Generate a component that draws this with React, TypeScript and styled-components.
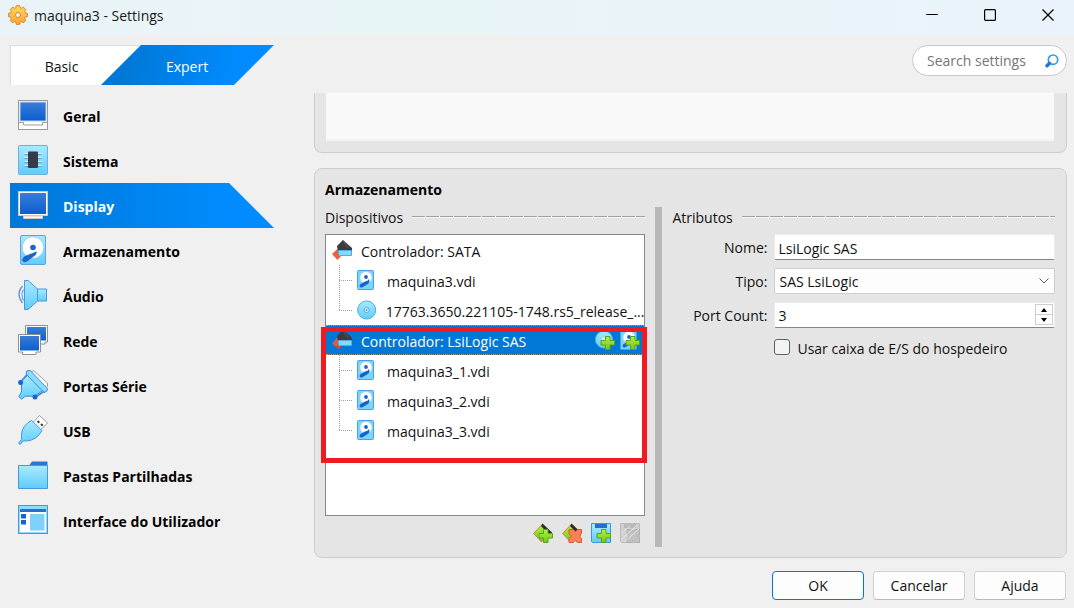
import React, { useState } from "react";
import styled, { createGlobalStyle, css } from "styled-components";

const GlobalStyle = createGlobalStyle`
  * { box-sizing: border-box; }
  body {
    margin: 0;
    background: #f0f0f0;
    color: #111;
    font: 14px/20px "Open Sans", "Noto Sans", sans-serif;
  }
  button, input, select, textarea { font: inherit; color: inherit; margin: 0; }
`;

const Window = styled.div`
  min-height: 100vh;
  display: flex;
  flex-direction: column;
`;

const TitleBar = styled.header`
  display: flex;
  align-items: center;
  height: 34px;
  padding: 0 0 4px 8px;
  background: linear-gradient(90deg, #e9f4f8, #e8f5f7 40%, #eaf3fb);
`;

const WindowTitle = styled.h1`
  flex: 1;
  margin: 0 0 0 6px;
  padding-top: 2px;
  font-size: 14px;
  font-weight: 400;
  color: #1a1a1a;
`;

const CaptionButton = styled.button`
  display: flex;
  align-items: center;
  justify-content: center;
  width: 58px;
  height: 30px;
  padding: 0;
  border: 0;
  background: none;
`;

const CaptionButtons = styled.div`
  display: flex;
  margin-right: -3px;
`;

const TopRow = styled.div`
  display: flex;
  justify-content: space-between;
  align-items: flex-start;
  padding: 11px 7px 8px 10px;
`;

const Tabs = styled.div`
  display: flex;
  width: 264px;
  height: 40px;
`;

const Tab = styled.button<{ $active?: boolean }>`
  border: 0;
  ${(p) =>
    p.$active
      ? css`
          width: 173px;
          padding: 4px 1px 0 0;
          margin-left: -39px;
          color: #fff;
          background: linear-gradient(100deg, #0078d7 15%, #008cff 80%);
          clip-path: polygon(40px 0, 100% 0, calc(100% - 40px) 100%, 0 100%);
        `
      : css`
          width: 130px;
          padding: 3px 28px 0 0;
          background: #fff;
          border: solid #dcdcdc;
          border-width: 1px 0 0 1px;
          clip-path: polygon(0 0, 100% 0, calc(100% - 40px) 100%, 0 100%);
        `}
`;

const SearchBox = styled.label`
  display: flex;
  align-items: center;
  width: 155px;
  height: 31px;
  padding: 0 7px 0 14px;
  border: 1px solid #c9c9c9;
  border-radius: 16px;
  background: #fff;
`;

const SearchInput = styled.input`
  flex: 1;
  min-width: 0;
  padding: 0;
  border: 0;
  outline: 0;
  background: none;
  &::placeholder { color: #757575; opacity: 1; }
`;

const Body = styled.div`
  flex: 1;
  display: grid;
  grid-template-columns: 264px minmax(0, 1fr);
  gap: 40px;
  padding: 0 7px 0 10px;
`;

const NavList = styled.nav`
  display: flex;
  flex-direction: column;
`;

const NavItem = styled.a<{ $active?: boolean }>`
  display: flex;
  align-items: center;
  gap: 15px;
  height: 45px;
  padding: 0 0 1px 8px;
  font-weight: 700;
  color: #000;
  text-decoration: none;
  ${(p) =>
    p.$active &&
    css`
      color: #fff;
      background: linear-gradient(90deg, #0078d7, #008cff 85%);
      clip-path: polygon(0 0, calc(100% - 45px) 0, 100% 100%, 0 100%);
    `}
`;

const NavLabel = styled.span`
  padding-top: 3px;
`;

const Pages = styled.main`
  display: flex;
  flex-direction: column;
  gap: 15px;
`;

const Card = styled.section<{ $clipped?: boolean }>`
  padding: 11px 11px 10px 10px;
  border: 1px solid #cdcdcd;
  border-radius: 8px;
  background: #e5e5e5;
  ${(p) =>
    p.$clipped &&
    css`
      height: 60px;
      padding: 0 12px 11px 11px;
      border-top: 0;
      border-radius: 0 0 8px 8px;
    `}
`;

const Description = styled.textarea`
  display: block;
  width: 100%;
  height: 48px;
  border: 0;
  border-bottom: 2px solid #f3f3f3;
  background: #f9f9f9;
  resize: none;
`;

const CardTitle = styled.h2`
  margin: 0 0 7px;
  font-size: 14px;
  line-height: 20px;
  color: #000;
`;

const Columns = styled.div`
  display: grid;
  grid-template-columns: minmax(0, 320fr) 7px minmax(0, 382fr);
  gap: 10px;
  min-height: 340px;
`;

const Splitter = styled.div`
  background: #b8b8b8;
`;

const Column = styled.div`
  display: flex;
  flex-direction: column;
`;

const GroupHeading = styled.h3`
  display: flex;
  align-items: center;
  gap: 9px;
  margin: 0 0 5px;
  font-size: 14px;
  font-weight: 400;
  line-height: 22px;
  &::after {
    content: "";
    flex: 1;
    height: 2px;
    margin-bottom: 2px;
    background:
      repeating-linear-gradient(90deg, #a0a0a0 0 13px, #fff 13px 14px) top / 100% 1px no-repeat,
      #f6f6f6;
  }
`;

const Tree = styled.div`
  flex: 1;
  border: 1px solid #828790;
  background: #fff;
`;

const TreeGroup = styled.div`
  position: relative;
`;

const Highlight = styled.div`
  position: absolute;
  inset: 2px -3px -18px -5px;
  border: 5px solid #ed1c24;
  pointer-events: none;
`;

const TreeRow = styled.div<{ $selected?: boolean }>`
  display: flex;
  align-items: center;
  height: 30px;
  padding: 0 4px 0 6px;
  white-space: nowrap;
  ${(p) =>
    p.$selected &&
    css`
      color: #fff;
      background: #0078d7;
      border: dotted #f08a28;
      border-width: 1px 0;
    `}
`;

const ControllerName = styled.span`
  flex: 1;
  margin-left: 9px;
  padding-top: 3px;
`;

const RowButton = styled.button`
  display: flex;
  margin-left: 5px;
  padding: 0;
  border: 0;
  background: none;
`;

const ChildRow = styled.div`
  display: flex;
  align-items: center;
  height: 30px;
  padding-left: 13px;
`;

const Branch = styled.span<{ $last?: boolean }>`
  display: flex;
  align-items: center;
  width: 13px;
  height: 30px;
  margin-right: 5px;
  background:
    repeating-linear-gradient(180deg, #a0a0a0 0 1px, #fff 1px 2px) left top / 1px
      ${(p) => (p.$last ? "16px" : "100%")} no-repeat;
  &::after {
    content: "";
    flex: 1;
    height: 1px;
    background: repeating-linear-gradient(90deg, #a0a0a0 0 1px, #fff 1px 2px);
  }
`;

const ChildName = styled.span`
  margin-left: 10px;
  padding-top: 3px;
  white-space: nowrap;
`;

const Toolbar = styled.div`
  display: flex;
  justify-content: flex-end;
  gap: 9px;
  padding: 7px 5px 4px;
`;

const ToolButton = styled.button`
  display: flex;
  padding: 0;
  border: 0;
  background: none;
`;

const Form = styled.div`
  display: grid;
  grid-template-columns: 95px minmax(0, 1fr);
  column-gap: 7px;
  row-gap: 8px;
`;

const FieldLabel = styled.label`
  height: 26px;
  line-height: 28px;
  text-align: right;
  white-space: nowrap;
`;

const fieldBase = css`
  width: 100%;
  height: 26px;
  border: 1px solid #ececec;
  border-bottom-color: #868686;
  border-radius: 2px;
  background: #fff;
`;

const TextField = styled.input`
  ${fieldBase}
  padding: 2px 3px 0;
`;

const SelectWrap = styled.div`
  display: grid;
  align-items: center;
  justify-items: end;
  & > * { grid-area: 1 / 1; }
  & > svg { margin-right: 6px; pointer-events: none; }
`;

const SelectField = styled.select`
  ${fieldBase}
  appearance: none;
  padding: 2px 4px 0;
  border-color: #cfcfcf;
  background: #fdfdfd;
`;

const SpinWrap = styled.div`
  ${fieldBase}
  display: flex;
  padding-right: 1px;
`;

const SpinField = styled.input`
  flex: 1;
  min-width: 0;
  padding: 2px 3px 0;
  border: 0;
  outline: 0;
  background: none;
  appearance: textfield;
  &::-webkit-inner-spin-button { appearance: none; }
`;

const SpinButtons = styled.div`
  display: flex;
  flex-direction: column;
  width: 18px;
  height: 21px;
  margin-top: 1px;
`;

const SpinButton = styled.button`
  display: flex;
  flex: 1;
  align-items: center;
  justify-content: center;
  padding: 0;
  border: 1px solid #cfcfcf;
  background: #fdfdfd;
  & + & { border-top: 0; }
`;

const CheckLabel = styled.label`
  grid-column: 2;
  display: flex;
  align-items: center;
  gap: 7px;
  height: 22px;
  white-space: nowrap;
`;

const CheckText = styled.span`
  padding-top: 4px;
`;

const Checkbox = styled.input`
  appearance: none;
  width: 16px;
  height: 16px;
  border: 1px solid #626262;
  border-radius: 3px;
  background: #f3f3f3;
  &:checked { background: #0078d7; }
`;

const Footer = styled.footer`
  display: flex;
  justify-content: flex-end;
  gap: 9px;
  padding: 13px 8px 8px;
`;

const DialogButton = styled.button<{ $primary?: boolean }>`
  width: 92px;
  height: 29px;
  padding: 0;
  border: 1px solid ${(p) => (p.$primary ? "#0078d4" : "#d0d0d0")};
  border-bottom-color: ${(p) => (p.$primary ? "#0078d4" : "#bababa")};
  border-radius: 4px;
  background: #fdfdfd;
`;

/* Gradients shared by every icon */
const Gradients = () => (
  <svg width="0" height="0" style={{ display: "block" }} aria-hidden>
    <defs>
      <linearGradient id="screen" x1="0" y1="0" x2="0" y2="1">
        <stop offset="0" stopColor="#3b7cd6" />
        <stop offset="1" stopColor="#0a5fd0" />
      </linearGradient>
      <linearGradient id="sky" x1="0" y1="0" x2="0" y2="1">
        <stop offset="0" stopColor="#a9eaff" />
        <stop offset="1" stopColor="#5fcdfb" />
      </linearGradient>
      <linearGradient id="gold" x1="0" y1="0" x2="0" y2="1">
        <stop offset="0" stopColor="#ffdc5c" />
        <stop offset="1" stopColor="#fba32c" />
      </linearGradient>
      <linearGradient id="green" x1="0" y1="0" x2="0" y2="1">
        <stop offset="0" stopColor="#b5f23c" />
        <stop offset="1" stopColor="#6fc61c" />
      </linearGradient>
    </defs>
  </svg>
);

const Icon30 = ({ children }: { children: React.ReactNode }) => (
  <svg width="30" height="30" viewBox="0 0 30 30" aria-hidden>{children}</svg>
);

const GearIcon = () => (
  <svg width="20" height="20" viewBox="0 0 20 20" aria-hidden>
    <g fill="url(#gold)" stroke="#dc8238" strokeWidth="1" strokeLinejoin="round">
      <path
        fillRule="evenodd"
        d="M8.3.6h3.4l.5 2.2 1.2.5 2-1.2 2.4 2.4-1.2 2 .5 1.3 2.3.5v3.4l-2.3.5-.5 1.2 1.2 2-2.4 2.4-2-1.2-1.2.5-.5 2.3H8.3l-.5-2.3-1.2-.5-2 1.2-2.4-2.4 1.2-2-.5-1.2L.6 11.7V8.3l2.3-.5.5-1.3-1.2-2 2.4-2.4 2 1.2 1.2-.5zM10 7.500a2.500 2.500 0 1 0 0 5 2.500 2.500 0 1 0 0-5z"
      />
    </g>
  </svg>
);

const GeneralIcon = () => (
  <Icon30>
    <rect x=".5" y=".5" width="29" height="29" fill="#fff" stroke="#9a9a9a" />
    <rect x="1.5" y="1.5" width="27" height="20" fill="#b9d3f3" />
    <rect x="2.5" y="2.5" width="25" height="18" fill="url(#screen)" />
    <path d="M1 22.5h4.500v2.500h19v-2.500H29" fill="none" stroke="#9a9a9a" />
  </Icon30>
);

const SystemIcon = () => (
  <Icon30>
    <rect x=".5" y=".5" width="29" height="29" rx="1" fill="url(#sky)" stroke="#6db1e4" />
    <path d="M6.500 9.500h17M6.500 13.500h17M6.500 17.500h17M6.500 21.500h17" stroke="#5a9dc4" />
    <path d="M6.500 8.500h17M6.500 12.500h17M6.500 16.500h17M6.500 20.500h17" stroke="#e9f8ff" />
    <rect x="10" y="6.500" width="10" height="16.500" rx="1" fill="#353b4a" />
  </Icon30>
);

const DisplayIcon = () => (
  <Icon30>
    <rect x=".5" y="1.500" width="29" height="24" fill="#fff" stroke="#c9c9c9" />
    <rect x="2" y="3" width="26" height="21" fill="url(#screen)" />
    <path d="M5.500 26h19v2.500h-19z" fill="#fff" stroke="#c9c9c9" />
  </Icon30>
);

const StorageIcon = () => (
  <Icon30>
    <rect x="2.500" y=".5" width="25" height="29" rx="1.500" fill="url(#sky)" stroke="#5ba3e2" />
    <circle cx="15" cy="12.500" r="10.800" fill="#fff" stroke="#86bde6" strokeWidth=".7" />
    <path d="M18.500 16.500q1 3-3.500 5.500L9 26.500q-3 1.500-4.500-.5-1-3 2.500-5z" fill="#1b66cc" />
    <circle cx="15" cy="12.500" r="2.800" fill="#1b66cc" />
  </Icon30>
);

const AudioIcon = () => (
  <Icon30>
    <path d="M4.500 6q-7 8 0 17" fill="none" stroke="#5f98d8" strokeWidth="1.300" />
    <path d="M6.500 10h-1.500q-2.500 4 0 10h2z" fill="#d8effc" stroke="#5f98d8" />
    <path d="M19 9h9.500v12H19z" fill="url(#sky)" stroke="#4b96dc" />
    <path d="M6.500.5h3.500l9.500 8.500v12L10 29.500H6.500z" fill="url(#sky)" stroke="#4b96dc" strokeLinejoin="round" />
  </Icon30>
);

const NetworkIcon = () => (
  <Icon30>
    <path d="M7.500.5h22v16.500h-2.500v2H12v-2H7.500z" fill="#fff" stroke="#8f8f8f" />
    <rect x="9" y="2" width="19" height="13.500" fill="url(#screen)" />
    <path d="M.5 9.500h22V27H18v2.500H4.500V27H.5z" fill="#fff" stroke="#8f8f8f" />
    <rect x="2" y="11" width="19" height="14.500" fill="url(#screen)" />
  </Icon30>
);

const SerialIcon = () => (
  <Icon30>
    <path d="M12.500 2.500 15.500.5 29.500 13v3.500L26 19.500z" fill="#fff" stroke="#9c9c9c" strokeLinejoin="round" />
    <path d="M3.500 10.500v11.500L.8 26.500l2.700 2.700 4-3H17l8.500-6.500L10 5z" fill="url(#sky)" stroke="#3d8cd8" strokeLinejoin="round" />
    <path d="M9 .7h3.500l17 18-.5 2.300-3 1.500L8 4z" fill="#8adcff" stroke="#3d8cd8" strokeLinejoin="round" />
    <path d="M2.500 12 9 4.500M17.500 27l8.500-5.500" stroke="#3d8cd8" strokeWidth="1.500" />
    <circle cx="2.600" cy="12.500" r="2.500" fill="#1b66cc" />
    <circle cx="17" cy="27" r="2.500" fill="#1b66cc" />
  </Icon30>
);

const UsbIcon = () => (
  <Icon30>
    <path d="M15 7.500 21.500.5l8 7.500-7 7z" fill="#fff" stroke="#9c9c9c" strokeLinejoin="round" />
    <path d="M19.500 6l1.800 1.800M23 9l1.800 1.800" stroke="#444" strokeWidth="2" />
    <path d="M13.500 5.500 24 15.500q-5 9.500-15 10.500H5L2 29.500.6 28l2.900-3.500V19q1-9 10-13.500z" fill="url(#sky)" stroke="#4b96dc" strokeLinejoin="round" />
  </Icon30>
);

const FolderIcon = () => (
  <Icon30>
    <path d="M11.500 5 14 1.500h15.500V8h-18z" fill="#2d74d2" />
    <path d="M.5 5.500h29v23H.5z" fill="url(#sky)" stroke="#4b96dc" />
  </Icon30>
);

const InterfaceIcon = () => (
  <Icon30>
    <rect x=".5" y=".5" width="29" height="28" fill="#8bdcff" stroke="#4b96dc" />
    <rect x="2" y="4" width="26" height="23" fill="#fff" />
    <path d="M2 4h26v3H2z" fill="#2d6fc8" />
    <path d="M3 9h5v4.500H3zM3 15h5v4.500H3z" fill="#1565cf" />
    <path d="M12 9h14.500v16.500H12z" fill="#7fd0fb" />
  </Icon30>
);

const Icon20 = ({ children }: { children: React.ReactNode }) => (
  <svg width="20" height="20" viewBox="0 0 20 20" aria-hidden>{children}</svg>
);

const ControllerIcon = ({ serial }: { serial?: boolean }) => (
  <Icon20>
    {serial ? (
      <>
        <path d="M0 13.500 8 4.500l3 3-7 9.500z" fill="#d9603f" />
        <path d="M4 17l4-5 3 3-4.500 4.500z" fill="#c94f33" />
      </>
    ) : (
      <path d="M0 14 6 8.500l4 6.500-4.500 5z" fill="#ef5f3a" />
    )}
    <path d="M11 0l9 8v3H6L5 6z" fill="#3b3b3d" />
    <path d="M11 .5l5 7.500" stroke="#5c5c5f" />
    <path d="M6.500 10.500h13v5h-13z" fill="#7fdcff" stroke="#55a9e4" />
  </Icon20>
);

const SmallDisk = () => (
  <>
    <rect x=".5" y=".5" width="16" height="19" rx="1" fill="#79d4ff" stroke="#4a9fe8" />
    <circle cx="9" cy="7.500" r="6" fill="#fff" stroke="#9fd3f5" strokeWidth=".6" />
    <path d="M3 14.500 8 11.500q3-.5 4-2.500 1.500 3.500-2 5.500l-4.500 2.800q-2.500.7-3-1z" fill="#1763cc" />
    <circle cx="9" cy="7" r="1.900" fill="#1763cc" />
  </>
);

const DiskIcon = () => <Icon20><SmallDisk /></Icon20>;

const DiscIcon = () => (
  <Icon20>
    <circle cx="10" cy="10" r="9.400" fill="url(#sky)" stroke="#4fa8e0" />
    <circle cx="10" cy="10" r="2.600" fill="#e8f7ff" stroke="#5ba3d8" />
    <circle cx="10" cy="10" r="1" fill="#4a93cc" />
  </Icon20>
);

const Plus = () => (
  <path
    d="M10.500 6.500h4.500v4h4.500v4.500H15v4.500h-4.500V15H6v-4.500h4.500z"
    fill="url(#green)"
    stroke="#57a51a"
  />
);

const Cross = ({ fill, stroke }: { fill: string; stroke: string }) => (
  <path
    d="M7 6.500h4l2.500 2 2.500-2h3.500v4L17.500 13l2 2.500v4h-4l-2-2-2.500 2H7v-4L9.500 13 7 10.500z"
    fill={fill}
    stroke={stroke}
  />
);

const AddDiscIcon = () => (
  <Icon20>
    <circle cx="9" cy="9.500" r="8.500" fill="url(#sky)" stroke="#4fb6dc" />
    <circle cx="9" cy="9.500" r="2" fill="#e8f7ff" />
    <Plus />
  </Icon20>
);

const AddDiskIcon = () => (
  <Icon20>
    <SmallDisk />
    <Plus />
  </Icon20>
);

const Diamond = () => (
  <>
    <path d="M9.500 1 .5 10.500l8 8.500 9-9z" fill="url(#green)" stroke="#d86a4c" strokeWidth=".8" />
    <path d="M9.500.5 19 9.500v3l-3-1-8-8.500z" fill="#2d2d2d" />
  </>
);

const AddControllerIcon = () => (
  <Icon20>
    <Diamond />
    <Plus />
  </Icon20>
);

const RemoveControllerIcon = () => (
  <Icon20>
    <Diamond />
    <Cross fill="#fb8158" stroke="#dc5432" />
  </Icon20>
);

const AddAttachmentIcon = () => (
  <Icon20>
    <path d="M.5.5h19v19h-18l-1-1z" fill="url(#sky)" stroke="#3f95da" />
    <path d="M4 1h12v4H4z" fill="#236fd0" />
    <Plus />
  </Icon20>
);

const RemoveAttachmentIcon = () => (
  <Icon20>
    <path d="M.5.5h19v19h-18l-1-1z" fill="#d0d0d0" stroke="#bcbcbc" />
    <path d="M4 1h12v4H4z" fill="#b9b9b9" />
    <Cross fill="#c2c2c2" stroke="#adadad" />
    <path d="M1 17 16 3M4 19 19 6M1 11l9-8" stroke="#e6e6e6" />
  </Icon20>
);

const SearchIcon = () => (
  <svg width="14" height="14" viewBox="0 0 14 14" aria-hidden>
    <circle cx="8" cy="5.700" r="4.700" fill="#fff" stroke="#2f9bec" strokeWidth="1.700" />
    <path d="M4.500 9.200 2 11.800" stroke="#2476d2" strokeWidth="3.400" strokeLinecap="round" />
  </svg>
);

const sections = [
  { name: "Geral", icon: GeneralIcon },
  { name: "Sistema", icon: SystemIcon },
  { name: "Display", icon: DisplayIcon },
  { name: "Armazenamento", icon: StorageIcon },
  { name: "Áudio", icon: AudioIcon },
  { name: "Rede", icon: NetworkIcon },
  { name: "Portas Série", icon: SerialIcon },
  { name: "USB", icon: UsbIcon },
  { name: "Pastas Partilhadas", icon: FolderIcon },
  { name: "Interface do Utilizador", icon: InterfaceIcon },
];

const Child = ({ name, disc, last }: { name: string; disc?: boolean; last?: boolean }) => (
  <ChildRow>
    <Branch $last={last} />
    {disc ? <DiscIcon /> : <DiskIcon />}
    <ChildName>{name}</ChildName>
  </ChildRow>
);

export default function App() {
  const [ports, setPorts] = useState(3);
  const [name, setName] = useState("LsiLogic SAS");

  return (
    <Window>
      <GlobalStyle />
      <Gradients />
      <TitleBar>
        <GearIcon />
        <WindowTitle>maquina3 - Settings</WindowTitle>
        <CaptionButtons>
          <CaptionButton aria-label="Minimize">
            <svg width="12" height="12" viewBox="0 0 12 12"><path d="M0 5.500h12" stroke="#000" /></svg>
          </CaptionButton>
          <CaptionButton aria-label="Maximize">
            <svg width="12" height="12" viewBox="0 0 12 12"><rect x=".6" y=".6" width="10.800" height="10.800" rx="1" fill="none" stroke="#000" strokeWidth="1.200" /></svg>
          </CaptionButton>
          <CaptionButton aria-label="Close">
            <svg width="12" height="12" viewBox="0 0 12 12"><path d="M.5.5l11 11M11.500.5l-11 11" stroke="#000" strokeWidth="1.200" /></svg>
          </CaptionButton>
        </CaptionButtons>
      </TitleBar>

      <TopRow>
        <Tabs>
          <Tab>Basic</Tab>
          <Tab $active>Expert</Tab>
        </Tabs>
        <SearchBox>
          <SearchInput placeholder="Search settings" aria-label="Search settings" />
          <SearchIcon />
        </SearchBox>
      </TopRow>

      <Body>
        <NavList>
          {sections.map(({ name: label, icon: Icon }) => (
            <NavItem key={label} href="#" $active={label === "Display"}>
              <Icon />
              <NavLabel>{label}</NavLabel>
            </NavItem>
          ))}
        </NavList>

        <Pages>
          <Card $clipped>
            <Description readOnly aria-label="Display" />
          </Card>

          <Card>
            <CardTitle>Armazenamento</CardTitle>
            <Columns>
              <Column>
                <GroupHeading>Dispositivos</GroupHeading>
                <Tree>
                  <TreeRow>
                    <ControllerIcon />
                    <ControllerName>Controlador: SATA</ControllerName>
                  </TreeRow>
                  <Child name="maquina3.vdi" />
                  <Child name="17763.3650.221105-1748.rs5_release_..." disc last />
                  <TreeGroup>
                    <TreeRow $selected>
                      <ControllerIcon serial />
                      <ControllerName>Controlador: LsiLogic SAS</ControllerName>
                      <RowButton aria-label="Add optical drive"><AddDiscIcon /></RowButton>
                      <RowButton aria-label="Add hard disk"><AddDiskIcon /></RowButton>
                    </TreeRow>
                    <Child name="maquina3_1.vdi" />
                    <Child name="maquina3_2.vdi" />
                    <Child name="maquina3_3.vdi" last />
                    <Highlight />
                  </TreeGroup>
                </Tree>
                <Toolbar>
                  <ToolButton aria-label="Add controller"><AddControllerIcon /></ToolButton>
                  <ToolButton aria-label="Remove controller"><RemoveControllerIcon /></ToolButton>
                  <ToolButton aria-label="Add attachment"><AddAttachmentIcon /></ToolButton>
                  <ToolButton aria-label="Remove attachment" disabled><RemoveAttachmentIcon /></ToolButton>
                </Toolbar>
              </Column>
              <Splitter />
              <Column>
                <GroupHeading>Atributos</GroupHeading>
                <Form>
                  <FieldLabel htmlFor="name">Nome:</FieldLabel>
                  <TextField id="name" value={name} onChange={(e) => setName(e.target.value)} />
                  <FieldLabel htmlFor="type">Tipo:</FieldLabel>
                  <SelectWrap>
                    <SelectField id="type">
                      <option>SAS LsiLogic</option>
                    </SelectField>
                    <svg width="10" height="6" viewBox="0 0 10 6" aria-hidden>
                      <path d="M.5.5 5 5 9.500.5" fill="none" stroke="#555" />
                    </svg>
                  </SelectWrap>
                  <FieldLabel htmlFor="ports">Port Count:</FieldLabel>
                  <SpinWrap>
                    <SpinField id="ports" type="number" value={ports} onChange={(e) => setPorts(Number(e.target.value))} />
                    <SpinButtons>
                      <SpinButton aria-label="Increase" onClick={() => setPorts(ports + 1)}>
                        <svg width="8" height="4" viewBox="0 0 8 4"><path d="M1 4l3-4 3 4z" /></svg>
                      </SpinButton>
                      <SpinButton aria-label="Decrease" onClick={() => setPorts(ports - 1)}>
                        <svg width="8" height="4" viewBox="0 0 8 4"><path d="M1 0l3 4 3-4z" /></svg>
                      </SpinButton>
                    </SpinButtons>
                  </SpinWrap>
                  <CheckLabel>
                    <Checkbox type="checkbox" />
                    <CheckText>Usar caixa de E/S do hospedeiro</CheckText>
                  </CheckLabel>
                </Form>
              </Column>
            </Columns>
          </Card>
        </Pages>
      </Body>

      <Footer>
        <DialogButton $primary>OK</DialogButton>
        <DialogButton>Cancelar</DialogButton>
        <DialogButton>Ajuda</DialogButton>
      </Footer>
    </Window>
  );
}
